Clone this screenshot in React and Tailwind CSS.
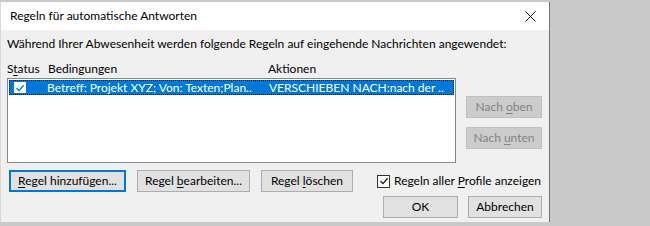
import React from 'react';

const font = { fontFamily: 'Lato, "Noto Sans", sans-serif' };

// Underlined access key letter
function Key({ children }) {
  return <span className="underline underline-offset-2">{children}</span>;
}

function Button({ children, className = '', disabled, primary }) {
  const base = 'flex items-center justify-center h-[22px] text-[12px] leading-none whitespace-nowrap';
  const look = disabled
    ? 'bg-[#cccccc] border border-[#bfbfbf] text-[#838383]'
    : primary
    ? 'bg-[#e1e1e1] border-2 border-[#0078d7] text-[#000]'
    : 'bg-[#e1e1e1] border border-[#adadad] text-[#000]';
  return (
    <div className={`${base} ${look} ${className}`}>
      <span>{children}</span>
    </div>
  );
}

function CheckMark({ color }) {
  return (
    <svg width="10" height="10" viewBox="0 0 10 10">
      <path d="M1.5 5.2 L4 7.6 L8.6 2.2" fill="none" stroke={color} strokeWidth="1.4" />
    </svg>
  );
}

export default function App() {
  return (
    <div className="w-[650px] h-[226px] bg-[#c9c9c9] pt-[2px] pb-[4px] flex text-black whitespace-nowrap" style={font}>
      <div className="w-[550px] h-full flex flex-col border-r border-l border-r-[#707070] border-l-[#d9d9d9]">
        {/* Title bar */}
        <div className="h-[28px] bg-white flex items-center pl-[9px] pr-[13px] shrink-0">
          <span className="text-[12px] flex-1">Regeln für automatische Antworten</span>
          <svg width="11" height="11" viewBox="0 0 11 11">
            <path d="M0.5 0.5 L10.5 10.5 M10.5 0.5 L0.5 10.5" stroke="#111" strokeWidth="1" />
          </svg>
        </div>

        {/* Body */}
        <div className="flex-1 bg-[#f0f0f0] pl-[6px] pr-[7px] pt-[6px] text-[12px]">
          <div className="leading-[16px]">
            Während Ihrer Abwesenheit werden folgende Regeln auf eingehende Nachrichten angewendet:
          </div>
          <div className="flex leading-[16px] mt-[9px]">
            <span className="w-[41px]">S<Key>t</Key>atus</span>
            <span className="w-[220px]">Bedingungen</span>
            <span>Aktionen</span>
          </div>

          <div className="flex mt-[1px]">
            <div className="w-[449px] h-[85px] bg-white border border-[#828790] p-[1px]">
              <div className="h-[15px] bg-[#0078d7] border border-dotted border-[#1a1a1a] flex items-center text-white">
                <div className="ml-[4px] w-[12px] h-[11px] bg-white flex items-center justify-center">
                  <CheckMark color="#0078d7" />
                </div>
                <span className="ml-[21px] w-[222px] leading-none">Betreff: Projekt XYZ; Von: Texten;Plan..</span>
                <span className="leading-none">VERSCHIEBEN NACH:nach der ..</span>
              </div>
            </div>
            <div className="ml-[10px] pt-[18px] flex flex-col gap-[9px]">
              <Button disabled className="w-[76px] h-[21px]">Nach <Key>o</Key>ben</Button>
              <Button disabled className="w-[76px] h-[21px]">Nach <Key>u</Key>nten</Button>
            </div>
          </div>

          <div className="flex items-center mt-[7px] ml-[2px]">
            <Button primary className="w-[117px]"><Key>R</Key>egel hinzufügen...</Button>
            <Button className="w-[113px] ml-[11px]">Regel <Key>b</Key>earbeiten...</Button>
            <Button className="w-[92px] ml-[11px]">Regel <Key>l</Key>öschen</Button>
            <div className="ml-[24px] flex items-center">
              <div className="w-[13px] h-[13px] bg-white border border-[#333] flex items-center justify-center">
                <CheckMark color="#222" />
              </div>
              <span className="ml-[4px]">Regeln aller <Key>P</Key>rofile anzeigen</span>
            </div>
          </div>

          <div className="flex justify-end gap-[10px] mt-[4px]">
            <Button className="w-[75px] h-[21px]">OK</Button>
            <Button className="w-[74px] h-[21px]">Abbrechen</Button>
          </div>
        </div>
      </div>
    </div>
  );
}
